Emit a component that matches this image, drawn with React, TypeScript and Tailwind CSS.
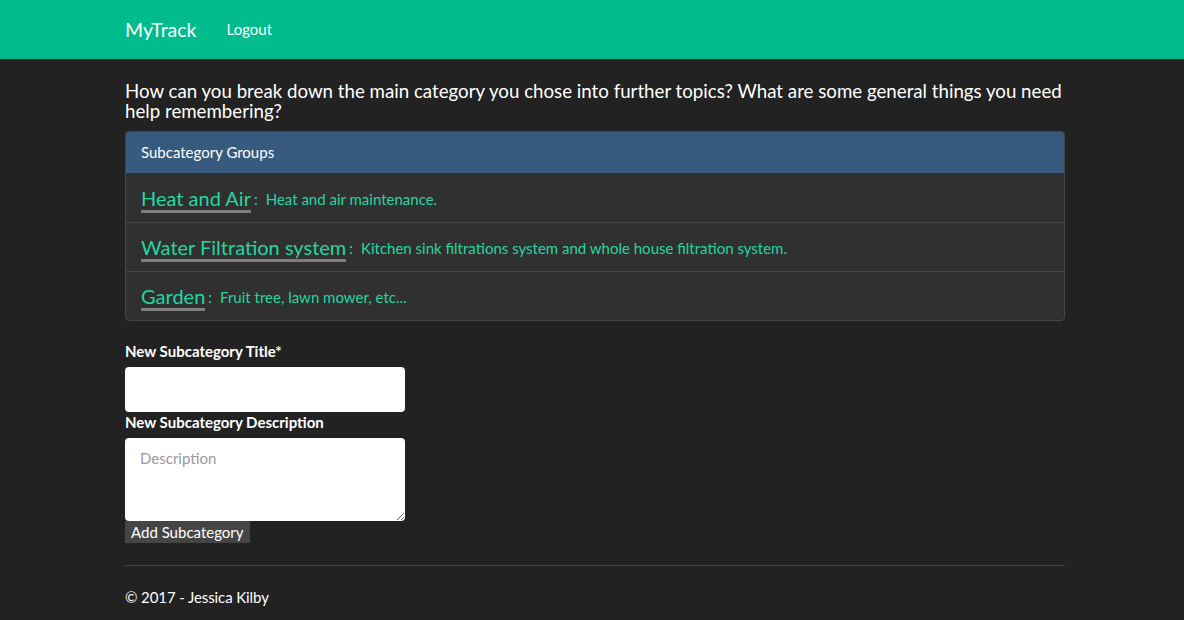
import React from "react";

const items = [
  { title: "Heat and Air", desc: "Heat and air maintenance." },
  { title: "Water Filtration system", desc: "Kitchen sink filtrations system and whole house filtration system." },
  { title: "Garden", desc: "Fruit tree, lawn mower, etc..." },
];

export default function App() {
  return (
    <div className="min-h-[620px] bg-[#222222] text-white font-['Lato','Liberation_Sans',sans-serif] text-[15px] leading-[21px]">
      <nav className="h-[59px] bg-[#00bc8c]">
        <div className="w-[940px] ml-[125px] flex items-center h-full pb-[1px]">
          <span className="text-[19.5px] leading-[21px] text-white">MyTrack</span>
          <span className="ml-[30px] text-[15px] text-white">Logout</span>
        </div>
      </nav>
      <main className="w-[940px] ml-[125px] pt-[22px]">
        <h4 className="text-[18.7px] leading-[20px] font-normal">
          How can you break down the main category you chose into further topics? What are some general things you need help remembering?
        </h4>
        <div className="mt-[10px] rounded-[4px] border border-[#464545] bg-[#303030] overflow-hidden">
          <div className="bg-[#375a7f] px-[15px] pt-[10px] h-[41px] text-white">Subcategory Groups</div>
          {items.map((it, i) => (
            <div
              key={it.title}
              className={`h-[49px] px-[15px] flex items-center ${i > 0 ? "border-t border-[#464545]" : ""}`}
            >
              <span className="text-[#24d6a1] text-[20px] leading-[22px] border-b-[3px] border-[#7f7f7f] pb-[1px] mt-[4px]">{it.title}</span>
              <span className="text-[#24d6a1] text-[15px] ml-[3px] mt-[3px]">:</span>
              <span className="text-[#24d6a1] text-[15px] ml-[8px] mt-[3px]">{it.desc}</span>
            </div>
          ))}
        </div>
        <form className="mt-[20px] flex flex-col items-start">
          <label className="font-bold text-[15px] leading-[21px]">New Subcategory Title*</label>
          <input className="mt-[5px] w-[280px] h-[45px] rounded-[4px] bg-white text-black px-[15px] outline-none" />
          <label className="font-bold text-[15px] leading-[21px]">New Subcategory Description</label>
          <textarea
            placeholder="Description"
            className="mt-[5px] w-[280px] h-[83px] rounded-[4px] bg-white text-black px-[15px] py-[10px] placeholder:text-[#999] outline-none resize-y"
          />
          <button type="button" className="bg-[#464545] text-white text-[15px] leading-[21px] px-[6px] h-[22px]">
            Add Subcategory
          </button>
        </form>
        <hr className="mt-[22px] border-t border-[#464545]" />
        <footer className="mt-[21px] text-[15px] tracking-[-0.1px]">© 2017 - Jessica Kilby</footer>
      </main>
    </div>
  );
}
